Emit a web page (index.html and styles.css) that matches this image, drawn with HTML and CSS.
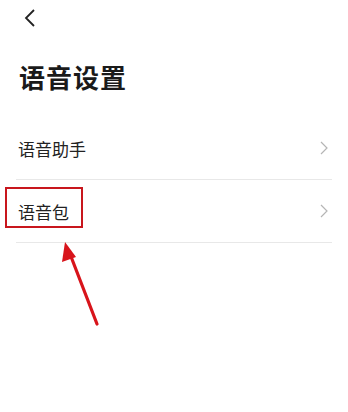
FILE: index.html
```html
<!DOCTYPE html>
<html lang="zh-CN">
<head>
    <meta charset="UTF-8">
    <meta name="viewport" content="width=device-width, initial-scale=1.0">
    <title>语音设置</title>
    <link rel="stylesheet" href="styles.css">
</head>
<body>
    <div class="page">
        <div class="topbar">
            <svg class="back" width="14" height="20" viewBox="0 0 14 20">
                <path d="M11 2 L3 10 L11 18" fill="none" stroke="#222" stroke-width="1.8"/>
            </svg>
        </div>

        <h1 class="title">语音设置</h1>

        <div class="list">
            <div class="row">
                <span class="label">语音助手</span>
                <svg class="arrow-r" width="8" height="14" viewBox="0 0 8 14">
                    <path d="M1 1 L7 7 L1 13" fill="none" stroke="#b5b5b5" stroke-width="1.2"/>
                </svg>
            </div>
            <div class="row">
                <span class="label">语音包</span>
                <svg class="arrow-r" width="8" height="14" viewBox="0 0 8 14">
                    <path d="M1 1 L7 7 L1 13" fill="none" stroke="#b5b5b5" stroke-width="1.2"/>
                </svg>
            </div>
        </div>

        <!-- marca roja -->
        <div class="mark-box"></div>
        <svg class="mark-arrow" width="348" height="412" viewBox="0 0 348 412">
            <line x1="97" y1="324" x2="70" y2="254" stroke="#d8141b" stroke-width="3.2" stroke-linecap="round"/>
            <polygon points="65,242 62,262 76,257" fill="#d8141b"/>
        </svg>
    </div>
</body>
</html>
```

FILE: styles.css
```css
body {
    margin: 0;
    background: #fff;
    font-family: "Noto Sans CJK SC", "Noto Sans", sans-serif;
    color: #1e1e1e;
}
.page {
    position: relative;
    width: 348px;
    height: 412px;
    overflow: hidden;
}
.topbar {
    height: 36px;
    padding-left: 23px;
    padding-top: 8px;
    box-sizing: border-box;
}
.back { display: block; }

.title {
    margin: 0;
    padding-left: 19px;
    margin-top: 24px;
    font-size: 26px;
    font-weight: bold;
    line-height: 34px;
    color: #1a1a1a;
    letter-spacing: 1px;
}

.list {
    margin: 23px 16px 0 16px;
}
.row {
    height: 62px;
    display: flex;
    align-items: center;
    justify-content: space-between;
    padding-left: 2px;
    padding-right: 4px;
    border-bottom: 1px solid #e8e8e8;
}
.label {
    font-size: 17px;
    color: #222;
}
.arrow-r { display: block; }

.mark-box {
    position: absolute;
    left: 5px;
    top: 187px;
    width: 74px;
    height: 37px;
    border: 2px solid #c8161d;
}
.mark-arrow {
    position: absolute;
    left: 0;
    top: 0;
}
```
